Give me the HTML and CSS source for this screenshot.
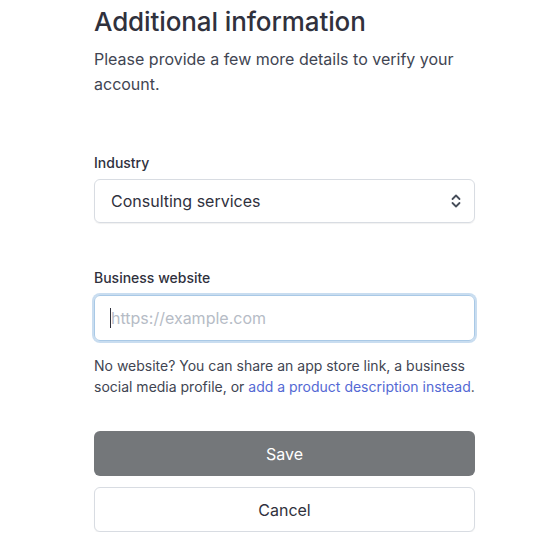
FILE: index.html
```html
<!DOCTYPE html>
<html>
<head>
<meta charset="utf-8">
<link rel="stylesheet" href="styles.css">
</head>
<body>
<main class="page">
  <h1 class="title">Additional information</h1>
  <p class="subtitle">Please provide a few more details to verify your account.</p>

  <div class="field field-industry">
    <label class="label">Industry</label>
    <div class="select">
      <span class="select-value">Consulting services</span>
      <svg class="chevrons" width="12" height="16" viewBox="0 0 12 16" fill="none" stroke="#474e5a" stroke-width="1.8" stroke-linecap="round" stroke-linejoin="round">
        <path d="M2.5 6 L6 2.5 L9.5 6"/>
        <path d="M2.5 10 L6 13.5 L9.5 10"/>
      </svg>
    </div>
  </div>

  <div class="field field-website">
    <label class="label">Business website</label>
    <div class="input">
      <span class="caret"></span><span class="placeholder">https://example.com</span>
    </div>
    <p class="help">No website? You can share an app store link, a business social media profile, or <a class="link" href="#">add a product description instead</a>.</p>
  </div>

  <div class="actions">
    <button class="btn btn-save">Save</button>
    <button class="btn btn-cancel">Cancel</button>
  </div>
</main>
</body>
</html>
```

FILE: styles.css
```css
* { box-sizing: border-box; }
html, body { margin: 0; padding: 0; background: #fff; }
body {
  font-family: Inter, "Noto Sans", sans-serif;
  color: #30313d;
  -webkit-font-smoothing: antialiased;
}
.page {
  width: 381px;
  margin-left: 94px;
  padding-top: 5px;
}
.title {
  margin: 0;
  font-size: 26px;
  line-height: 34px;
  font-weight: 500;
  color: #30313d;
  letter-spacing: -0.1px;
}
.subtitle {
  margin: 8px 0 0;
  font-size: 16px;
  line-height: 25px;
  color: #414552;
}
.field-industry { margin-top: 56px; }
.label {
  display: block;
  font-size: 14px;
  line-height: 20px;
  font-weight: 500;
  color: #30313d;
}
.select {
  margin-top: 6px;
  height: 44px;
  border: 1px solid #d8dce2;
  border-radius: 6px;
  box-shadow: 0 1px 1px rgba(0,0,0,0.06);
  display: flex;
  align-items: center;
  justify-content: space-between;
  padding: 0 12px 0 16px;
  font-size: 16px;
}
.chevrons { display: block; }
.field-website { margin-top: 45px; }
.input {
  margin-top: 7px;
  height: 46px;
  border: 1px solid #a9c9e6;
  box-shadow: 0 0 0 2px #c9ddf0;
  border-radius: 6px;
  display: flex;
  align-items: center;
  padding: 0 15px;
  font-size: 16px;
}
.caret {
  width: 1px;
  height: 20px;
  background: #30313d;
}
.placeholder { color: #b6bcc6; }
.help {
  margin: 14px 0 0;
  font-size: 14px;
  line-height: 21px;
  color: #414552;
}
.link { color: #5469d4; text-decoration: none; }
.actions {
  margin-top: 34px;
  display: flex;
  flex-direction: column;
  gap: 11px;
}
.btn {
  height: 45px;
  border-radius: 6px;
  font-family: inherit;
  font-size: 16px;
  font-weight: 400;
  width: 100%;
}
.btn-save {
  background: #74777a;
  border: none;
  color: #fff;
}
.btn-cancel {
  background: #fff;
  border: 1px solid #d8dce2;
  color: #30313d;
  box-shadow: 0 1px 1px rgba(0,0,0,0.05);
}
```
